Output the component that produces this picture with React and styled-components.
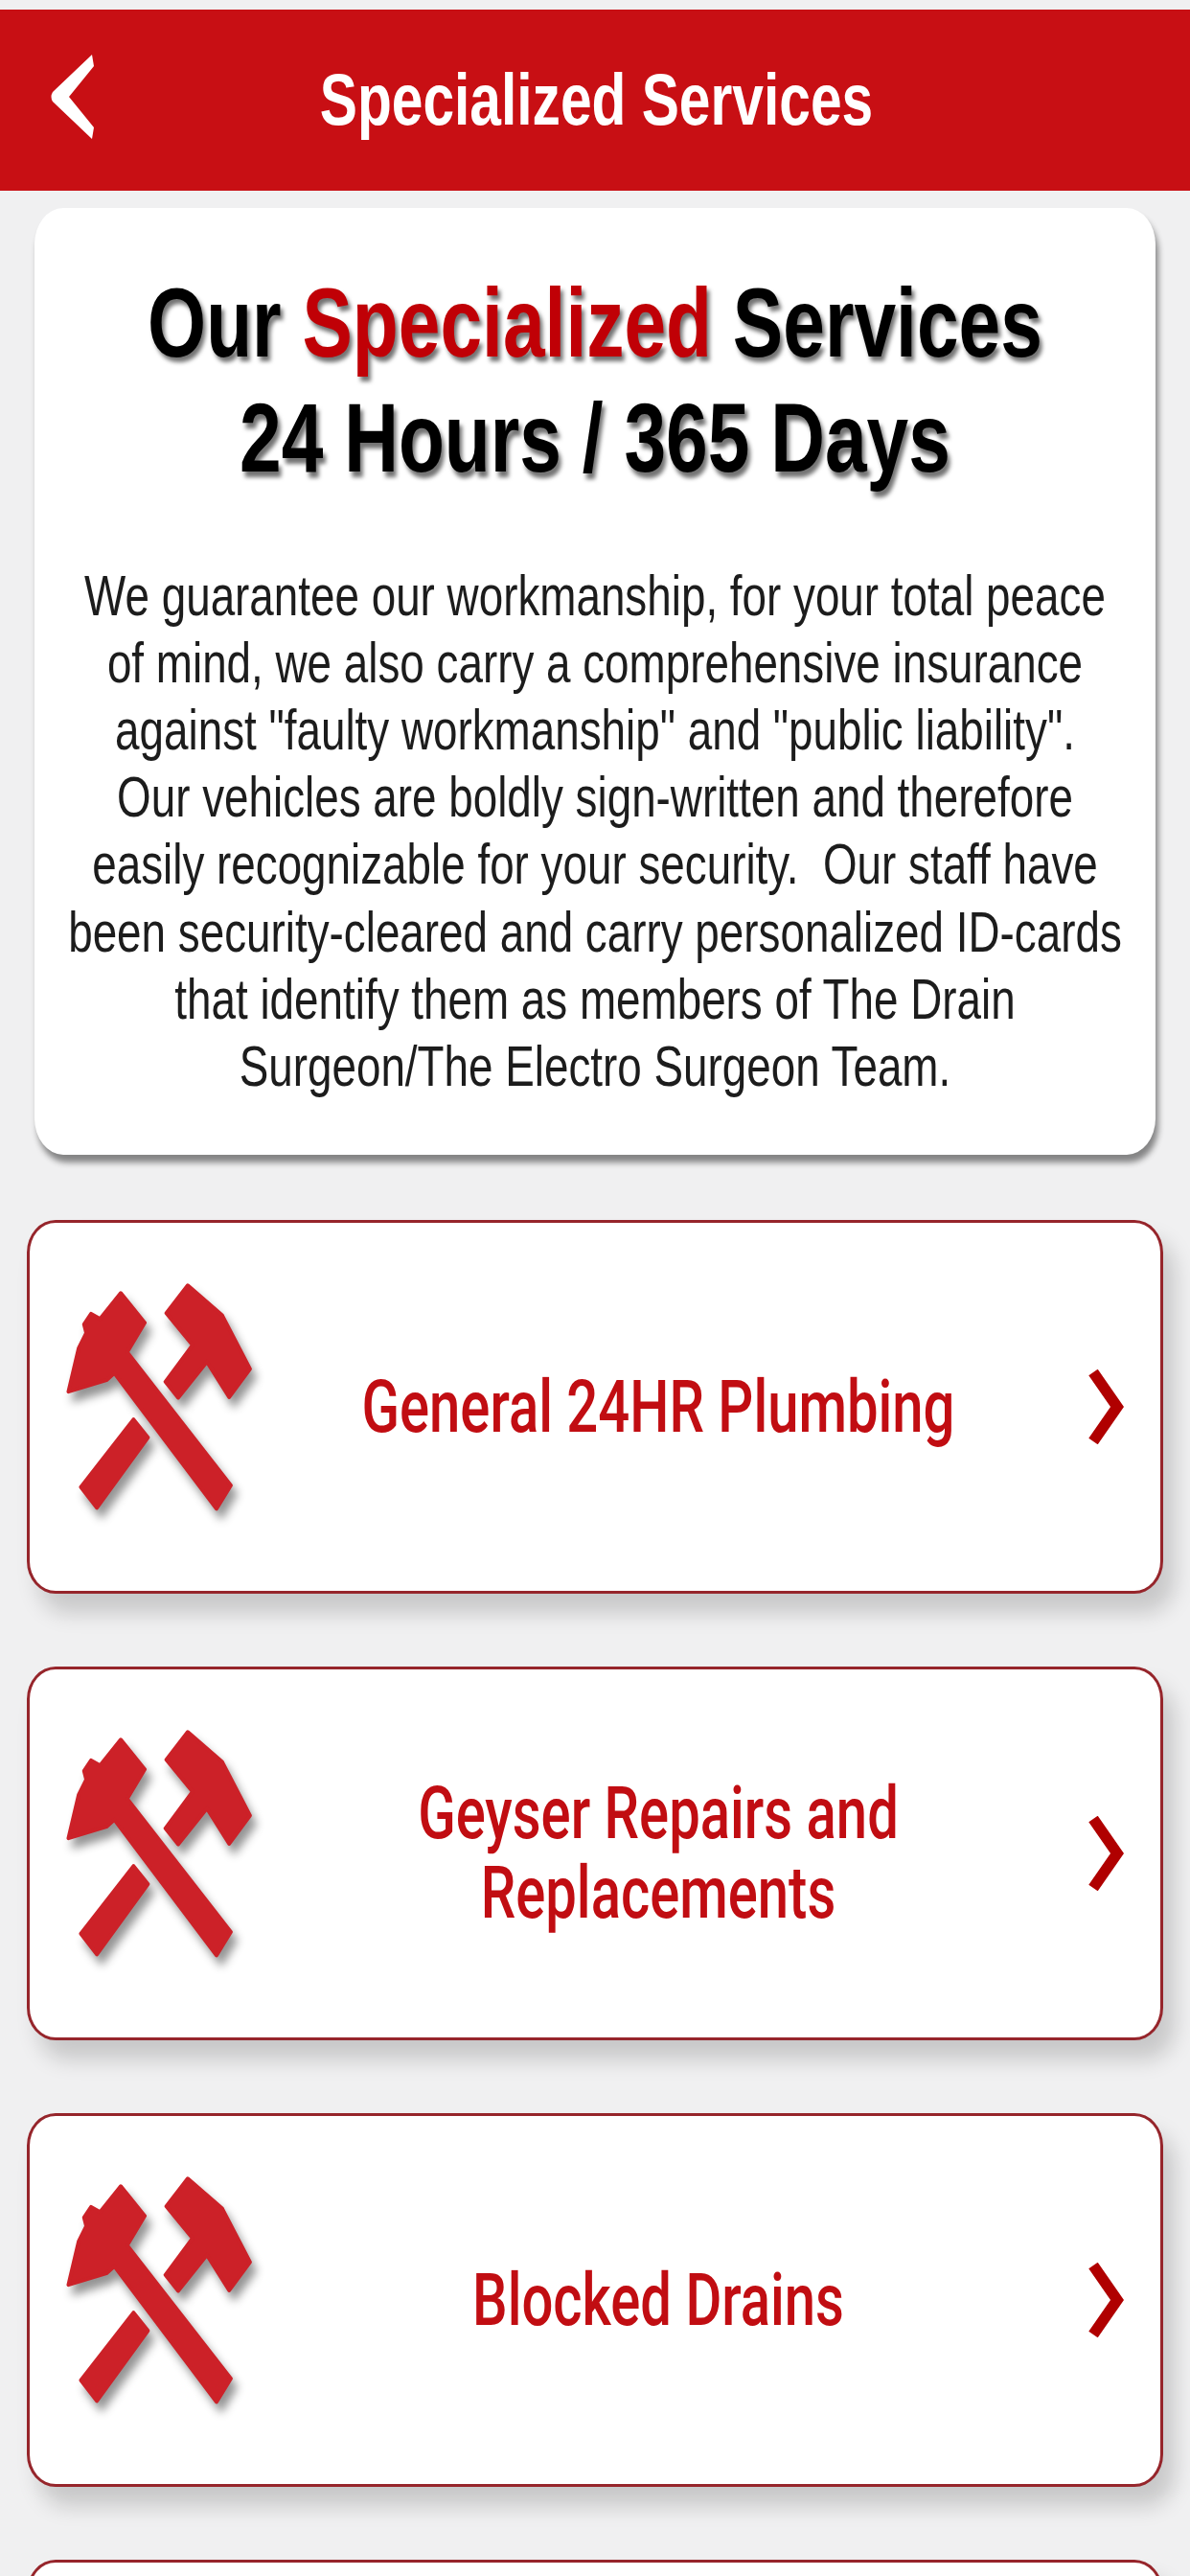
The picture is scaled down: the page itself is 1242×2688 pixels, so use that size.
import React from "react";
import styled, { createGlobalStyle } from "styled-components";

const Global = createGlobalStyle`
  html, body { margin: 0; padding: 0; background: #f0f0f0; }
  #root { width: 1242px; height: 2688px; overflow: hidden; }
`;

const STRETCH = 1.31;

const Page = styled.div`
  display: flex;
  flex-direction: column;
  width: 1242px;
  height: 2688px;
  overflow: hidden;
  background: #f0f0f1;
  padding-top: 10px;
  box-sizing: border-box;
`;

const Header = styled.header`
  position: relative;
  flex: none;
  height: 189px;
  background: #c80f14;
  display: flex;
  align-items: center;
  justify-content: center;
`;

const BackIcon = styled.svg`
  position: absolute;
  left: 52px;
  top: 45px;
  width: 48px;
  height: 92px;
`;

const HeaderTitle = styled.h1`
  margin: 0 0 2px 3px;
  font: 700 58.7px/60px "Liberation Sans", Arial, sans-serif;
  color: #fff;
  transform: scaleY(${STRETCH});
  white-space: nowrap;
`;

const IntroCard = styled.section`
  flex: none;
  box-sizing: border-box;
  height: 988px;
  margin: 18px 36px 0 36px;
  padding-top: 61px;
  background: #fff;
  border-radius: 30px / 38px;
  box-shadow: 3px 8px 6px rgba(0, 0, 0, 0.45);
`;

const HeadingFrame = styled.div`
  height: 240px;
  display: flex;
  align-items: center;
  justify-content: center;
`;

const Heading = styled.h2`
  margin: 0;
  font: 700 78.5px/91.6px "Liberation Sans", Arial, sans-serif;
  color: #000;
  text-align: center;
  text-shadow: 3px 4px 4px rgba(0, 0, 0, 0.55);
  transform: scaleY(${STRETCH});
  white-space: nowrap;
`;

const Accent = styled.span`
  color: #c00006;
`;

const BodyFrame = styled.div`
  margin-top: 68px;
  height: 562px;
  display: flex;
  align-items: center;
  justify-content: center;
`;

const Body = styled.p`
  margin: 0;
  font: 400 45.8px/53.6px "Liberation Sans", Arial, sans-serif;
  color: #1c1c1c;
  text-align: center;
  transform: scaleY(${STRETCH});
  white-space: nowrap;
`;

const ServiceList = styled.div`
  display: flex;
  flex-direction: column;
  gap: 76px;
  margin: 68px 28px 0 28px;
`;

const ServiceCard = styled.a`
  flex: none;
  box-sizing: border-box;
  height: 390px;
  padding: 0 38px 0 35px;
  display: flex;
  align-items: center;
  background: #fff;
  border: 3px solid #96252b;
  border-radius: 30px / 34px;
  box-shadow: 12px 20px 22px rgba(0, 0, 0, 0.17);
`;

const HammerIcon = styled.svg`
  flex: none;
  width: 200px;
  height: 243px;
  margin-bottom: 20px;
  filter: drop-shadow(5px 9px 5px rgba(0, 0, 0, 0.42));
`;

const ServiceLabel = styled.div`
  flex: 1;
  padding-left: 8px;
  font: 500 58px/62.6px Roboto, "Liberation Sans", sans-serif;
  color: #c10d12;
  text-align: center;
  transform: scaleY(${STRETCH});
`;

const ChevronIcon = styled.svg`
  flex: none;
  width: 38px;
  height: 78px;
  margin-left: 35px;
`;

const Hammers = () => (
  <HammerIcon viewBox="200 290 600 730" aria-hidden="true">
    <g fill="#cc2128" stroke="#cc2128" strokeWidth="12" strokeLinejoin="round">
      <path d="M380 327 L455 420 L400 512 L725 930 L680 1003 L360 578 L335 600 L216 636 L248 500 L272 452 L265 425 L287 392 L315 408 Z" />
      <path d="M590 303 L698 397 L785 565 L720 653 L650 542 L560 655 L520 605 L605 490 L523 390 Z" />
      <path d="M420 723 L465 780 L305 1000 L255 935 Z" />
    </g>
  </HammerIcon>
);

const services = [
  ["General 24HR Plumbing"],
  ["Geyser Repairs and", "Replacements"],
  ["Blocked Drains"],
  [""],
];

export default function App() {
  return (
    <Page>
      <Global />
      <Header>
        <BackIcon viewBox="0 0 48 92" aria-hidden="true">
          <path d="M44 2 L46 14 L20 46 L46 78 L44 90 L3 51 Q0 46 3 41 Z" fill="#fff" />
        </BackIcon>
        <HeaderTitle>Specialized Services</HeaderTitle>
      </Header>
      <IntroCard>
        <HeadingFrame>
          <Heading>
            Our <Accent>Specialized</Accent> Services
            <br />
            24 Hours / 365 Days
          </Heading>
        </HeadingFrame>
        <BodyFrame>
          <Body>
            We guarantee our workmanship, for your total peace
            <br />
            of mind, we also carry a comprehensive insurance
            <br />
            against "faulty workmanship" and "public liability".
            <br />
            Our vehicles are boldly sign-written and therefore
            <br />
            easily recognizable for your security.&nbsp; Our staff have
            <br />
            been security-cleared and carry personalized ID-cards
            <br />
            that identify them as members of The Drain
            <br />
            Surgeon/The Electro Surgeon Team.
          </Body>
        </BodyFrame>
      </IntroCard>
      <ServiceList>
        {services.map((lines, i) => (
          <ServiceCard key={i}>
            <Hammers />
            <ServiceLabel>
              {lines.map((l, j) => (
                <div key={j}>{l}</div>
              ))}
            </ServiceLabel>
            <ChevronIcon viewBox="0 0 38 78" aria-hidden="true">
              <path d="M6 3 L31 39 L6 75" fill="none" stroke="#b00000" strokeWidth="11.5" />
            </ChevronIcon>
          </ServiceCard>
        ))}
      </ServiceList>
    </Page>
  );
}
